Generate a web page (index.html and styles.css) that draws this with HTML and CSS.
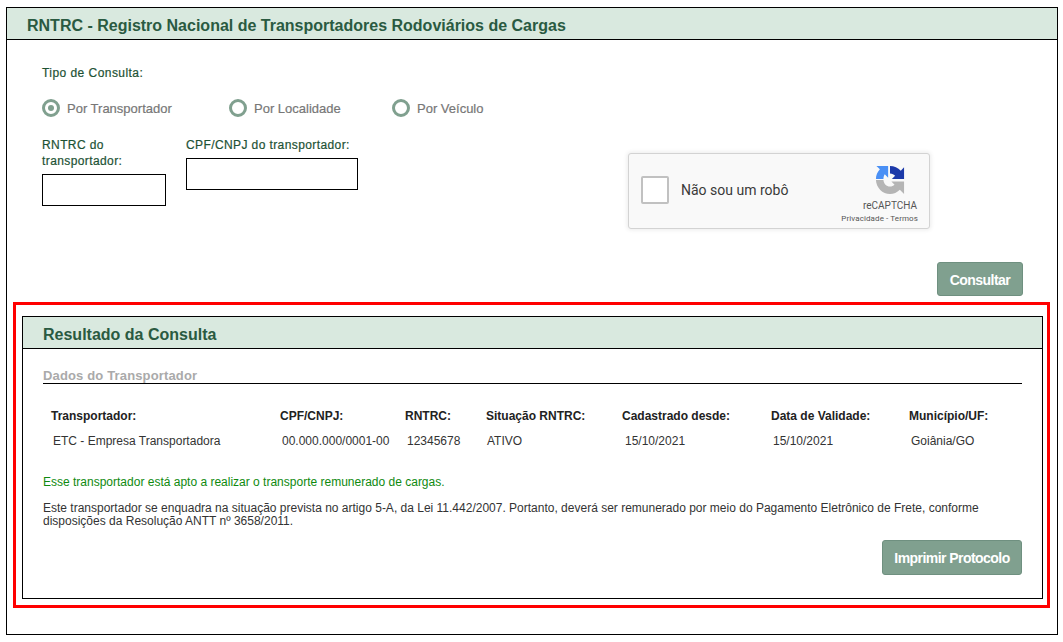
FILE: index.html
```html
<!DOCTYPE html>
<html lang="pt-BR">
<head>
    <meta charset="UTF-8">
    <title>RNTRC - Consulta</title>
    <link rel="stylesheet" href="styles.css">
</head>
<body>
    <div class="panel outer">
        <h1 class="panel-title">RNTRC - Registro Nacional de Transportadores Rodoviários de Cargas</h1>

        <form class="search">
            <div class="field-label type-label">Tipo de Consulta:</div>

            <div class="radios">
                <label class="radio radio-first"><span class="dot checked"></span>Por Transportador</label>
                <label class="radio radio-second"><span class="dot"></span>Por Localidade</label>
                <label class="radio"><span class="dot"></span>Por Veículo</label>
            </div>

            <div class="search-row">
                <div class="field field-rntrc">
                    <label class="field-label">RNTRC do transportador:</label>
                    <input type="text" class="text-input">
                </div>
                <div class="field field-cpf">
                    <label class="field-label">CPF/CNPJ do transportador:</label>
                    <input type="text" class="text-input">
                </div>

                <div class="captcha">
                    <span class="captcha-box"></span>
                    <span class="captcha-text">Não sou um robô</span>
                    <div class="captcha-brand">
                        <svg class="captcha-logo" width="30" height="30" viewBox="0 0 32 32">
                            <path fill="#b5b5b5" d="M1 16h8c.3 3.900 3.200 7 7 7 2 0 3.500-.7 4.800-1.900L17.500 17.500H31V31l-4.500-4.500C23.500 29.500 20 31 16 31 8 31 1.300 24.300 1 16z"/>
                            <path fill="#4a90f5" d="M1 15c0-4 1.500-7.500 4.200-10.500L1.500 1H14v12.500l-3.600-3.600C9.500 11.200 9 13 9 15z"/>
                            <path fill="#1c3aa9" d="M16 1c4.500 0 8.500 2 11.500 5.200L31 2.500V15H18l3.500-3.500C20.200 10 18.400 9 16 9z"/>
                        </svg>
                        <span class="captcha-name">reCAPTCHA</span>
                        <span class="captcha-links">Privacidade - Termos</span>
                    </div>
                </div>
            </div>

            <div class="actions actions-search">
                <button type="button" class="btn btn-search">Consultar</button>
            </div>
        </form>

        <div class="highlight">
            <div class="panel result">
                <h2 class="panel-title result-title">Resultado da Consulta</h2>

                <div class="result-body">
                    <h3 class="section-title">Dados do Transportador</h3>

                    <div class="data-grid">
                        <span class="data-head">Transportador:</span>
                        <span class="data-head">CPF/CNPJ:</span>
                        <span class="data-head">RNTRC:</span>
                        <span class="data-head">Situação RNTRC:</span>
                        <span class="data-head">Cadastrado desde:</span>
                        <span class="data-head">Data de Validade:</span>
                        <span class="data-head">Município/UF:</span>
                        <span class="data-value">ETC - Empresa Transportadora</span>
                        <span class="data-value">00.000.000/0001-00</span>
                        <span class="data-value">12345678</span>
                        <span class="data-value value-status">ATIVO</span>
                        <span class="data-value value-since">15/10/2021</span>
                        <span class="data-value">15/10/2021</span>
                        <span class="data-value">Goiânia/GO</span>
                    </div>

                    <p class="msg-ok">Esse transportador está apto a realizar o transporte remunerado de cargas.</p>
                    <p class="msg">Este transportador se enquadra na situação prevista no artigo 5-A, da Lei 11.442/2007. Portanto, deverá ser remunerado por meio do Pagamento Eletrônico de Frete, conforme disposições da Resolução ANTT nº 3658/2011.</p>

                    <div class="actions">
                        <button type="button" class="btn btn-print">Imprimir Protocolo</button>
                    </div>
                </div>
            </div>
        </div>
    </div>
</body>
</html>
```

FILE: styles.css
```css
:root {
    --header-color: #d9e9df;
    --title-color: #2a5a41;
    --label-color: #1d5234;
    --button-color: #80a08f;
    --text-color: #333333;
}

* {
    box-sizing: border-box;
}

body {
    margin: 0;
    background-color: #ffffff;
    font-family: 'Liberation Sans', Arial, sans-serif;
    font-size: 12px;
    color: var(--text-color);
}

.panel {
    border: 1px solid #000000;
}

.outer {
    margin: 7px 5px 0 6px;
    height: 628px;
}

.panel-title {
    margin: 0;
    height: 32px;
    padding-left: 20px;
    background-color: var(--header-color);
    border-bottom: 1px solid #000000;
    color: var(--title-color);
    font-size: 16px;
    font-weight: bold;
    line-height: 36px;
}

.search {
    padding: 25px 34px 0 35px;
}

.field-label {
    display: block;
    color: var(--label-color);
    font-size: 12px;
    line-height: 16px;
    letter-spacing: 0.4px;
    -webkit-text-stroke: 0.2px;
}

.type-label {
    letter-spacing: 0.45px;
}

.radios {
    display: flex;
    margin-top: 17px;
}

.radio {
    display: flex;
    align-items: center;
    height: 20px;
    color: #777777;
    font-size: 13px;
    font-weight: normal;
    -webkit-text-stroke: 0.2px;
    gap: 7px;
}

.radio-first {
    width: 187px;
}

.radio-second {
    width: 163px;
}

.dot {
    position: relative;
    width: 18px;
    height: 18px;
    border: 3px solid var(--button-color);
    border-radius: 50%;
}

.dot.checked::after {
    content: "";
    position: absolute;
    left: 3px;
    top: 3px;
    width: 6px;
    height: 6px;
    border-radius: 50%;
    background-color: var(--button-color);
}

.search-row {
    display: flex;
    align-items: flex-start;
    margin-top: 19px;
}

.field-rntrc {
    width: 124px;
}

.field-cpf {
    width: 172px;
    margin-left: 20px;
}

.text-input {
    display: block;
    width: 100%;
    height: 32px;
    margin-top: 5px;
    border: 1px solid #000000;
    background-color: #ffffff;
}

.captcha {
    display: flex;
    align-items: center;
    width: 302px;
    height: 76px;
    margin-left: 270px;
    margin-top: 16px;
    padding-left: 12px;
    border: 1px solid #d3d3d3;
    border-radius: 3px;
    background-color: #f9f9f9;
    box-shadow: 0 0 4px 1px rgba(0, 0, 0, 0.08);
}

.captcha-box {
    width: 28px;
    height: 28px;
    margin-top: -2px;
    border: 2px solid #c1c1c1;
    border-radius: 2px;
    background-color: #ffffff;
}

.captcha-text {
    margin-left: 12px;
    margin-top: -2px;
    font-family: Roboto, sans-serif;
    font-size: 14px;
    color: #3a3a3a;
}

.captcha-brand {
    display: flex;
    flex-direction: column;
    align-items: flex-end;
    width: 80px;
    margin-left: auto;
    margin-right: 11px;
    font-family: Roboto, sans-serif;
    color: #555555;
}

.captcha-logo {
    display: block;
    margin-top: 8px;
    margin-right: 13px;
}

.captcha-name {
    margin-top: 5px;
    margin-right: 1px;
    font-size: 10px;
    line-height: 12px;
}

.captcha-links {
    margin-top: 1px;
    font-size: 8px;
    letter-spacing: 0.1px;
    line-height: 12px;
}

.actions {
    display: flex;
    justify-content: flex-end;
}

.actions-search {
    margin-top: 33px;
}

.btn {
    padding: 1px 0 0;
    border: 1px solid #6f9080;
    border-radius: 3px;
    background-color: var(--button-color);
    color: #ffffff;
    font-family: 'Liberation Sans', Arial, sans-serif;
    font-size: 14px;
    font-weight: bold;
    letter-spacing: -0.55px;
}

.btn-search {
    width: 86px;
    height: 34px;
}

.btn-print {
    width: 140px;
    height: 35px;
    margin-top: 12px;
}

.highlight {
    margin: 6px 7px 0 6px;
    height: 306px;
    padding: 11px 4px 6px 6px;
    border: 3px solid #ff0000;
}

.result {
    height: 283px;
}

.result-title {
    height: 32px;
    line-height: 35px;
    font-size: 16px;
}

.result-body {
    padding: 0 20px;
}

.section-title {
    margin: 18px 0 0;
    height: 17px;
    border-bottom: 1px solid #000000;
    color: #aaaaaa;
    font-size: 13px;
    font-weight: bold;
    letter-spacing: 0.15px;
    line-height: 18px;
}

.data-grid {
    display: grid;
    grid-template-columns: 229px 125px 81px 136px 149px 138px 1fr;
    row-gap: 9px;
    margin-top: 24px;
    padding-left: 8px;
}

.data-head {
    color: #222222;
    font-weight: bold;
    line-height: 16px;
}

.data-value {
    padding-left: 2px;
    line-height: 16px;
}

.value-status {
    padding-left: 1px;
}

.value-since {
    padding-left: 3px;
}

.msg-ok {
    margin: 25px 0 0;
    color: #0f8a0f;
    line-height: 16px;
}

.msg {
    margin: 12px 0 0;
    line-height: 13px;
}
```
